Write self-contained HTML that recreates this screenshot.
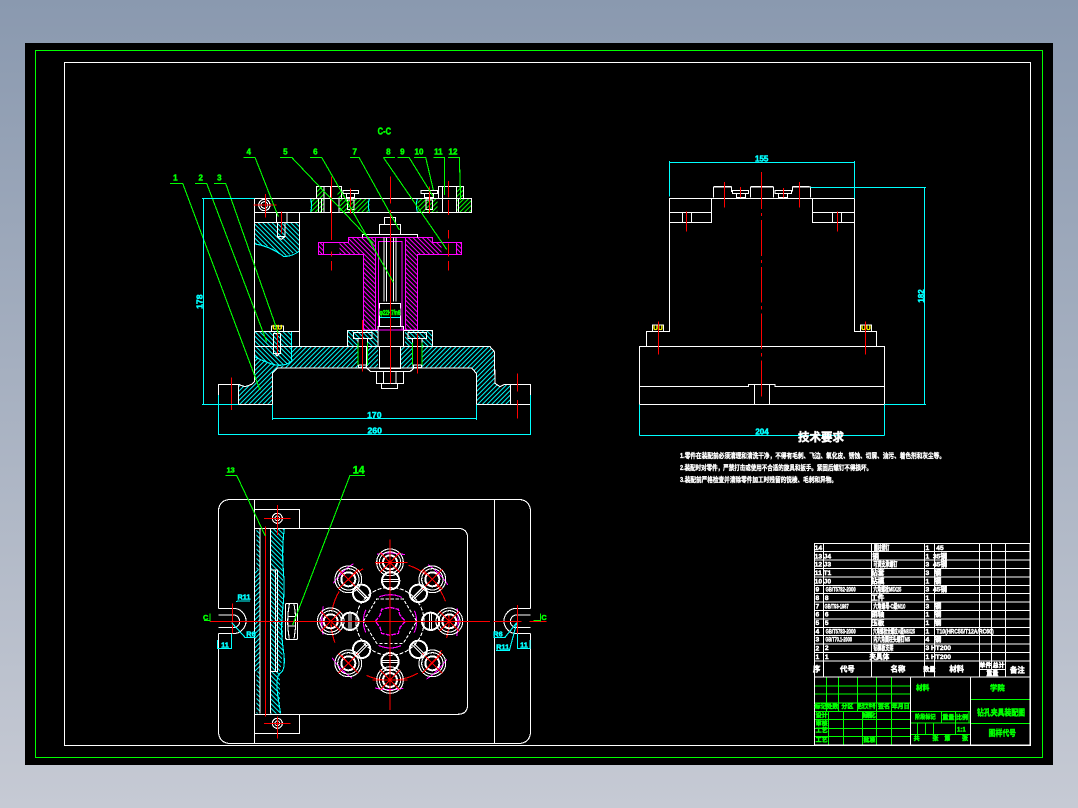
<!DOCTYPE html>
<html><head><meta charset="utf-8"><title>CAD</title>
<style>
html,body{margin:0;padding:0;width:1078px;height:808px;overflow:hidden;background:linear-gradient(#8a99af,#c6cad4)}
svg{position:absolute;left:0;top:0}
text{font-family:"Liberation Sans","Noto Sans CJK SC",sans-serif;font-weight:700;text-anchor:middle}
.w{stroke:#fff;fill:none}.g{stroke:#0f0;fill:none}.c{stroke:#0ff;fill:none}.r{stroke:#f00;fill:none}.m{stroke:#f0f;fill:none}
.tg{fill:#0f0;stroke:#0f0;stroke-width:1.5}.tc{fill:#0ff;stroke:#0ff;stroke-width:1.5}.tw{fill:#fff;stroke:#fff;stroke-width:1.5}
</style></head><body>
<svg width="1078" height="808" viewBox="0 0 1078 808" shape-rendering="crispEdges">
<defs>
<pattern id="hc" width="14" height="14" patternUnits="userSpaceOnUse"><path d="M-2 16L16 -2M-9 9L9 -9M5 23L23 5" stroke="#0ff" stroke-width="3"/></pattern>
<pattern id="hb" width="14" height="14" patternUnits="userSpaceOnUse"><path d="M-2 -2L16 16M-9 5L9 23M5 -9L23 9" stroke="#0ff" stroke-width="3"/></pattern>
<pattern id="hg" width="14" height="14" patternUnits="userSpaceOnUse"><path d="M-2 16L16 -2M-9 9L9 -9M5 23L23 5" stroke="#0f0" stroke-width="3"/></pattern>
<pattern id="hm" width="14" height="14" patternUnits="userSpaceOnUse"><path d="M-2 -2L16 16M-9 5L9 23M5 -9L23 9" stroke="#f0f" stroke-width="3"/></pattern>
<g id="lb"><circle r="40" class="w" stroke-width="3.3"/><circle r="32" class="w" stroke-width="3.3"/><circle r="21" class="w" stroke-width="6"/><path d="M-30 -30L30 30M-30 30L30 -30" class="r" stroke-width="3.3"/></g>
<g id="sb"><circle r="26" fill="#000" class="w" stroke-width="6"/><path d="M-25 -3H25M-25 3H25" class="w" stroke-width="3.3"/></g>
</defs>
<rect x="25" y="43" width="1028" height="722" fill="#000"/>
<rect x="35.5" y="50.5" width="1007" height="707" fill="none" stroke="#0f0" stroke-width="1"/>
<rect x="64.5" y="62.5" width="966" height="683" fill="none" stroke="#fff" stroke-width="1"/>

<!-- SECTION VIEW -->
<g transform="translate(160,120) scale(.33333)" stroke-width="3.3">
<polygon points="283,680 990,680 1003,695 1005,790 1020,800 1034,793 1052,793 1052,853 949,853 949,760 935,744 352,744 337,760 337,853 235,853 235,793 255,800 275,793 283,785" fill="url(#hc)"/>
<polygon points="283,307 418,307 418,393 372,410 330,380 285,372" fill="url(#hb)"/>
<rect x="283" y="634" width="112" height="46" fill="url(#hb)"/>
<rect x="562" y="632" width="90" height="48" fill="url(#hb)"/>
<rect x="735" y="632" width="83" height="48" fill="url(#hb)"/>
<polygon points="283,680 395,680 397,722 370,738 330,730 285,710" fill="#000"/>
<polygon points="283,680 395,680 397,722 370,738 330,730 285,710" fill="url(#hb)"/>
<rect x="654" y="680" width="68" height="65" fill="#000"/>
<rect x="594" y="655" width="28" height="80" fill="#000"/><rect x="758" y="655" width="28" height="80" fill="#000"/>
<path d="M395 634V722M397 722Q370 745 330 730T285 710M285 372Q330 378 372 410Q400 408 418 393" class="c"/>
<rect x="452" y="235" width="38" height="42" fill="url(#hg)"/><rect x="470" y="199" width="22" height="36" fill="url(#hg)"/>
<rect x="540" y="235" width="88" height="42" fill="url(#hg)"/><rect x="772" y="235" width="60" height="42" fill="url(#hg)"/>
<rect x="890" y="235" width="45" height="42" fill="url(#hg)"/><rect x="890" y="199" width="20" height="36" fill="url(#hg)"/>
<rect x="532" y="215" width="14" height="20" fill="url(#hg)"/>
<path d="M452 237Q458 256 452 275M628 237Q622 256 628 275M772 237Q766 256 772 275" class="c"/>
<!-- white outlines -->
<path d="M283 277V785L275 793 255 800 235 793H175V853H337V760L352 744H935L949 760V853H1112V793H1034L1020 800 1005 790 1003 695 990 680H283M235 793V853M1052 793V853M283 307H418M283 634H418M418 277V680" class="w"/>
<rect x="283" y="235" width="652" height="42" class="w"/>
<path d="M470 235V199H545V235M835 235V199H910V235M492 199V277M512 199V277M537 235V277M847 199V277M889 199V277M475 235V277M485 235V277M895 235V277" class="w"/>
<circle cx="313" cy="255" r="17" class="w"/><circle cx="313" cy="255" r="10" class="w"/>
<!-- magenta hub -->
<path d="M565 352H647V630H610V404H538V367H565ZM818 352H736V630H772V404H845V367H818ZM475 367H490V404H475ZM890 367H905V404H890Z" fill="url(#hm)"/>
<path d="M475 367H565V352H818V367H905V404H772V630H610V404H475ZM647 352V630M736 352V630M490 367V404M890 367V404M528 404H540M655 364H726V630H655Z" class="m"/>
<!-- center bolt -->
<path d="M607 352V343H772V352M658 343V313H722V343M674 313V292H707V313M672 352V545M680 352V545M700 352V545M708 352V545M658 550H722V620H658ZM654 620H730V680H654ZM658 680V745H722V680M650 755H730V790H650ZM665 790H712V805H665ZM670 755V790M708 755V790" class="w"/>
<rect x="658" y="565" width="64" height="22" fill="#000"/><text x="690" y="585" font-size="21" class="tg" textLength="62" lengthAdjust="spacingAndGlyphs">φ22H7/n6</text>
<path d="M660 592H720" class="c"/>
<path d="M654 630H730" class="m"/>
<!-- bolts on base -->
<path d="M562 680V632H654M818 680V632H730M580 637H636V655H580ZM744 637H800V655H744ZM594 655H622V735H594ZM758 655H786V735H758ZM596 735H620V742H596ZM760 735H784V742H760ZM620 680V744M620 744L632 755H750L762 744" class="w"/>
<path d="M594 668V735M622 668V735M758 668V735M786 668V735" class="g"/>
<!-- left screw -->
<path d="M334 634V618H371V634M340 640H362V700H340ZM345 700L351 708 358 700" class="w"/>
<text x="352" y="628" font-size="20" fill="#ff0" stroke="#ff0" stroke-width="1">UU</text>
<path d="M349 277V307H381V277M352 307V350H375V307M352 350L364 358 375 350" class="w"/>
<!-- top small screws -->
<path d="M549 211H596V220H549ZM783 211H832V220H783ZM560 220V232H584V220M794 220V232H820V220M563 240H582V268H563ZM798 240H818V268H798Z" class="w"/>
<!-- red -->
<path d="M515 170V360M515 395V410M515 423V452M691 170V250M691 270V790M865 183V232M865 240V285M865 330V356M865 370V410M865 423V452M572 205V280M808 200V280M316 222V292M280 255H350M364 275V340M352 622V700M608 600V755M772 640V760M214 773V870M1072 760V815M1072 840V895" class="r"/>
<!-- leaders -->
<path d="M250 112H285L355 290M360 112H395L640 370M450 112H485L700 487M570 112H597L718 330M670 112H705M670 112L860 388M712 112H747L820 230M762 112H797L820 210M820 112H853V225M864 112H898L902 240M30 190H68L300 810M105 190H140L320 665M162 190H197L355 640" class="g"/>
<g font-size="24" class="tg"><text x="673" y="44" font-size="30" textLength="40" lengthAdjust="spacingAndGlyphs">C-C</text>
<text x="266" y="104">4</text><text x="376" y="104">5</text><text x="466" y="104">6</text><text x="584" y="104">7</text><text x="685" y="104">8</text><text x="727" y="104">9</text><text x="777" y="104">10</text><text x="835" y="104">11</text><text x="879" y="104">12</text><text x="46" y="182">1</text><text x="122" y="182">2</text><text x="178" y="182">3</text></g>
<!-- dims -->
<path d="M126 235H283M130 235V853M126 853H235M337 853V900M949 853V900M337 895H949M175 825V945M1112 825V945M175 943H1112" class="c"/>
<g font-size="26" class="tc"><text x="643" y="894">170</text><text x="644" y="941">260</text><text transform="translate(128,545) rotate(-90)">178</text></g>
</g>

<!-- PLAN VIEW -->
<g transform="translate(200,460) scale(.33333)" stroke-width="3.3">
<rect x="170" y="205" width="10" height="125" fill="url(#hb)"/><rect x="170" y="635" width="10" height="125" fill="url(#hb)"/>
<rect x="163" y="330" width="18" height="305" fill="url(#hc)"/>
<polygon points="213,205 253,205 248,260 250,330 248,430 250,560 240,640 240,760 213,760" fill="url(#hb)"/>
<path d="M253 205Q245 270 250 330T248 450 250 570 240 640 242 760" class="c"/>
<path d="M55 445V158Q55 118 95 118H952Q992 118 992 158V445M992 521V811Q992 851 952 851H95Q55 851 55 811V521" class="w"/>
<path d="M55 445H100A38 38 0 0 1 100 521H55M55 465H100A19 19 0 0 1 100 503H55M992 445H950A38 38 0 0 0 950 521H992M992 465H950A19 19 0 0 0 950 503H992" class="w"/>
<path d="M163 118V851M883 118V851M163 148H299V205M163 821H299V763M163 205H773Q803 205 803 235V733Q803 763 773 763H163M180 205V760M196 205V760M212 205V760M212 330H232V635H212M226 330V635" class="w"/>
<circle cx="232" cy="175" r="15" class="w"/><circle cx="232" cy="175" r="7" class="w"/>
<circle cx="232" cy="790" r="15" class="w"/><circle cx="232" cy="790" r="7" class="w"/>
<rect x="257" y="430" width="36" height="108" rx="4" class="w"/>
<path d="M268 432Q258 484 268 536M282 432Q292 484 282 536M264 470H286M264 498H286" class="w"/>
<path d="M30 484H870M880 484H965M988 484H1040M197 200V770M232 135V225M232 770V835M192 175H272M192 790H272M98 430V520M952 435V525" class="r"/>
<path d="M30 460V485M12 482H30M1022 460V485M1022 482H1000" class="g"/>
<path d="M76 46H110L196 228M495 46H450L278 495" class="g"/>
<g class="tg"><text x="92" y="38" font-size="22">13</text><text x="476" y="40" font-size="32">14</text><text x="17" y="480" font-size="22">C</text><text x="1032" y="480" font-size="22">C</text></g>
<path d="M108 425L115 423H150M95 488L135 532H165M53 540V566H95V520M990 540V566H952V520M880 532H915L950 488M888 572H928L950 490" class="c"/>
<g class="tc" font-size="22"><text x="132" y="418">R11</text><text x="153" y="530">R6</text><text x="75" y="562">11</text><text x="894" y="530">R6</text><text x="908" y="568">R11</text><text x="972" y="562">11</text></g>
</g>
<!-- circle pattern -->
<g transform="translate(300,530) scale(.33333)" stroke-width="3.3">
<circle cx="270" cy="274" r="205" class="m" stroke-dasharray="85 76" stroke-dashoffset="40"/>
<circle cx="270" cy="274" r="177" class="r" stroke-dasharray="60 40" stroke-dashoffset="10"/>
<circle cx="270" cy="274" r="102" class="w" stroke-dasharray="12 5"/>
<circle cx="270" cy="274" r="80" class="m" stroke-dasharray="70 56" stroke-dashoffset="35"/>
<polygon points="190,274 230,207 310,207 350,274 310,340 230,340" class="w" stroke-dasharray="10 5"/>
<path d="M270 232L295 238 300 256 316 274 300 292 295 310 270 316 245 310 240 292 226 274 240 256 245 238Z" class="m" stroke-width="4" stroke-dasharray="14 3"/>
<use href="#lb" x="270" y="97"/><use href="#lb" x="397" y="148"/><use href="#lb" x="448" y="274"/><use href="#lb" x="397" y="400"/><use href="#lb" x="270" y="450"/><use href="#lb" x="145" y="400"/><use href="#lb" x="92" y="274"/><use href="#lb" x="145" y="148"/>
<use href="#sb" transform="translate(272,152)"/><use href="#sb" transform="translate(355,190) rotate(-45)"/><use href="#sb" transform="translate(392,274) rotate(90)"/><use href="#sb" transform="translate(355,358) rotate(45)"/><use href="#sb" transform="translate(270,395)"/><use href="#sb" transform="translate(185,358) rotate(-45)"/><use href="#sb" transform="translate(150,274) rotate(90)"/><use href="#sb" transform="translate(185,190) rotate(45)"/>
<path d="M270 28V540M0 274H540M218 450H322M225 97H322" class="r"/>
</g>

<!-- SIDE VIEW -->
<g transform="translate(630,150) scale(.33333)" stroke-width="3.3">
<path d="M28 589H763V763H28ZM28 709H355V703H435V709H763M373 703V763M418 703V763M49 589V545H118V145H245V218H118M118 187H245M157 187V218M185 187V218M673 145V545H740V589M547 145H673M547 145V218H673M547 187H673M607 187V218M635 187V218M245 145H547" class="w"/>
<path d="M250 143V111H305V125H307M252 109H305M361 143V111H431V143M363 109H429M487 125V111H541V143M487 109H539M308 121H356V131H308ZM435 121H484V131H435ZM320 131V143H347V131M445 131V143H472V131M67 545V525H101V545M691 545V525H725V545" class="w"/>
<text x="84" y="540" font-size="20" fill="#ff0" stroke="#ff0" stroke-width="1">UU</text><text x="708" y="540" font-size="20" fill="#ff0" stroke="#ff0" stroke-width="1">UU</text>
<path d="M394 66V177M394 189V198M394 210V318M394 330V339M394 351V458M394 468V478M394 490V597M394 609V619M394 631V740M283 96V173M331 111V143M460 114V143M508 96V173M169 184V245M622 184V245M85 514V614M706 514V614" class="r"/>
<path d="M118 33V140M673 33V145M118 37H673M541 112H888M763 763H888M884 112V763M28 763V857M763 763V857M28 856H763" class="c"/>
<g class="tc" font-size="24"><text x="395" y="34">155</text><text x="396" y="853">204</text><text transform="translate(882,438) rotate(-90)">182</text></g>
</g>

<!-- TECH NOTES -->
<g class="tw" style="stroke-width:.35">
<text x="821" y="441" font-size="11.5" style="stroke-width:.5">技术要求</text>
<g style="text-anchor:start" font-size="7">
<text x="680" y="458" textLength="265" lengthAdjust="spacingAndGlyphs" style="text-anchor:start">1.零件在装配前必须清理和清洗干净，不得有毛刺、飞边、氧化皮、锈蚀、切屑、油污、着色剂和灰尘等。</text>
<text x="680" y="470" textLength="192" lengthAdjust="spacingAndGlyphs" style="text-anchor:start">2.装配时对零件，严禁打击或使用不合适的旋具和扳手。紧固后螺钉不得损坏。</text>
<text x="680" y="482" textLength="157" lengthAdjust="spacingAndGlyphs" style="text-anchor:start">3.装配前严格检查并清除零件加工时残留的锐棱、毛刺和异物。</text>
</g></g>

<!-- TITLE BLOCK -->
<g transform="translate(810,540) scale(.33333)" stroke-width="3.3">
<path d="M14 438H302M14 462H302M14 489H302M14 514H302M14 538H302M14 565H302M14 590H302M50 411V514M85 411V514M142 411V514M199 411V615M244 411V615M55 514V615M100 514V615M157 514V615M302 514H481M302 549H481M302 583H481M394 514V549M436 514V583M477 514V549M322 549V583M346 549V583M370 549V583M481 478H660M481 550H660" class="g"/>
<path d="M14 10H660V615H14ZM14 34H660M14 60H660M14 86H660M14 111H660M14 136H660M14 160H660M14 186H660M14 212H660M14 237H660M14 262H660M14 287H660M14 312H660M14 338H660M14 363H660M14 411H660M40 10V411M184 10V411M343 10V411M373 10V411M508 10V411M544 10V363M586 10V411M508 388H586M544 363V388M302 411V615M481 411V615" class="w"/>
<g class="tw" font-size="20">
<text x="25" y="30">14</text><text x="25" y="55">13</text><text x="25" y="80">12</text><text x="25" y="105">11</text><text x="25" y="130">10</text><text x="22" y="155">9</text><text x="22" y="180">8</text><text x="22" y="205">7</text><text x="22" y="230">6</text><text x="22" y="255">5</text><text x="22" y="280">4</text><text x="22" y="305">3</text><text x="22" y="332">2</text><text x="22" y="357">1</text>
<text x="52" y="55">J4</text><text x="52" y="80">J3</text><text x="52" y="105">T1</text><text x="52" y="130">J0</text><text x="92" y="155" textLength="90" lengthAdjust="spacingAndGlyphs">GB/T5782-2000</text><text x="50" y="180">8</text><text x="80" y="205" textLength="72" lengthAdjust="spacingAndGlyphs">GB/T93-1987</text><text x="50" y="230">6</text><text x="50" y="255">5</text><text x="92" y="280" textLength="90" lengthAdjust="spacingAndGlyphs">GB/T5783-2000</text><text x="86" y="305" textLength="80" lengthAdjust="spacingAndGlyphs">GB/T70.1-2000</text><text x="50" y="330">2</text><text x="50" y="357">1</text>
<text x="215" y="30" textLength="46" lengthAdjust="spacingAndGlyphs">圆柱销钉</text><text x="197" y="55">销</text><text x="226" y="80" textLength="72" lengthAdjust="spacingAndGlyphs">可调支承螺钉</text><text x="203" y="105">钻套</text><text x="203" y="130">钻模</text><text x="232" y="155" textLength="84" lengthAdjust="spacingAndGlyphs">六角螺栓M5X25</text><text x="203" y="180">工件</text><text x="238" y="205" textLength="96" lengthAdjust="spacingAndGlyphs">六角螺母-C级M10</text><text x="203" y="230">销轴</text><text x="203" y="255">压板</text><text x="252" y="280" textLength="126" lengthAdjust="spacingAndGlyphs">六角螺栓全螺纹A级M8X25</text><text x="245" y="305" textLength="110" lengthAdjust="spacingAndGlyphs">内六角圆柱头螺钉M5</text><text x="220" y="330" textLength="60" lengthAdjust="spacingAndGlyphs">钻模板支架</text><text x="208" y="357">夹具体</text>
<text x="352" y="30">1</text><text x="352" y="55">1</text><text x="352" y="80">3</text><text x="352" y="105">3</text><text x="352" y="130">1</text><text x="352" y="155">3</text><text x="352" y="180">1</text><text x="352" y="205">3</text><text x="352" y="230">1</text><text x="352" y="255">1</text><text x="352" y="280">1</text><text x="352" y="305">4</text><text x="352" y="330">3</text><text x="352" y="357">1</text>
<text x="390" y="30">45</text><text x="390" y="55">35钢</text><text x="390" y="80">45钢</text><text x="384" y="105">钢</text><text x="384" y="130">钢</text><text x="390" y="155">45钢</text><text x="384" y="205">钢</text><text x="384" y="230">钢</text><text x="384" y="255">钢</text><text x="465" y="280" textLength="172" lengthAdjust="spacingAndGlyphs">T10(HRC55/T12A/RC60)</text><text x="384" y="305">钢</text><text x="393" y="330">HT200</text><text x="393" y="357">HT200</text>
<g font-size="22"><text x="112" y="395">代号</text><text x="264" y="395">名称</text><text x="358" y="395" font-size="18">数量</text><text x="440" y="395">材料</text><text x="526" y="382" font-size="18">单件</text><text x="566" y="382" font-size="18">总计</text><text x="547" y="407" font-size="18">重量</text><text x="622" y="397">备注</text><text x="20" y="395">序</text></g>
</g>
<g class="tg" font-size="18">
<text x="32" y="505">标记</text><text x="67" y="505">处数</text><text x="112" y="505">分区</text><text x="170" y="505" textLength="54" lengthAdjust="spacingAndGlyphs">更改文件号</text><text x="222" y="505">签名</text><text x="272" y="505">年月日</text>
<text x="35" y="532">设计</text><text x="35" y="556">审核</text><text x="35" y="578">工艺</text><text x="35" y="606">工艺</text><text x="177" y="532" textLength="40">标准化</text><text x="178" y="606">批准</text>
<text x="338" y="450" font-size="20">材料</text><text x="346" y="537" textLength="62" lengthAdjust="spacingAndGlyphs">阶段标记</text><text x="415" y="538">重量</text><text x="456" y="538">比例</text><text x="454" y="574">1:1</text>
<text x="320" y="602">共</text><text x="376" y="602">张</text><text x="412" y="602">第</text><text x="465" y="602">张</text>
<text x="562" y="451" font-size="22">学院</text><text x="573" y="526" font-size="25" textLength="144" lengthAdjust="spacingAndGlyphs">钻孔夹具装配图</text><text x="577" y="588" font-size="25" textLength="82" lengthAdjust="spacingAndGlyphs">图样代号</text>
</g>
</g>
</svg>
</body></html>
